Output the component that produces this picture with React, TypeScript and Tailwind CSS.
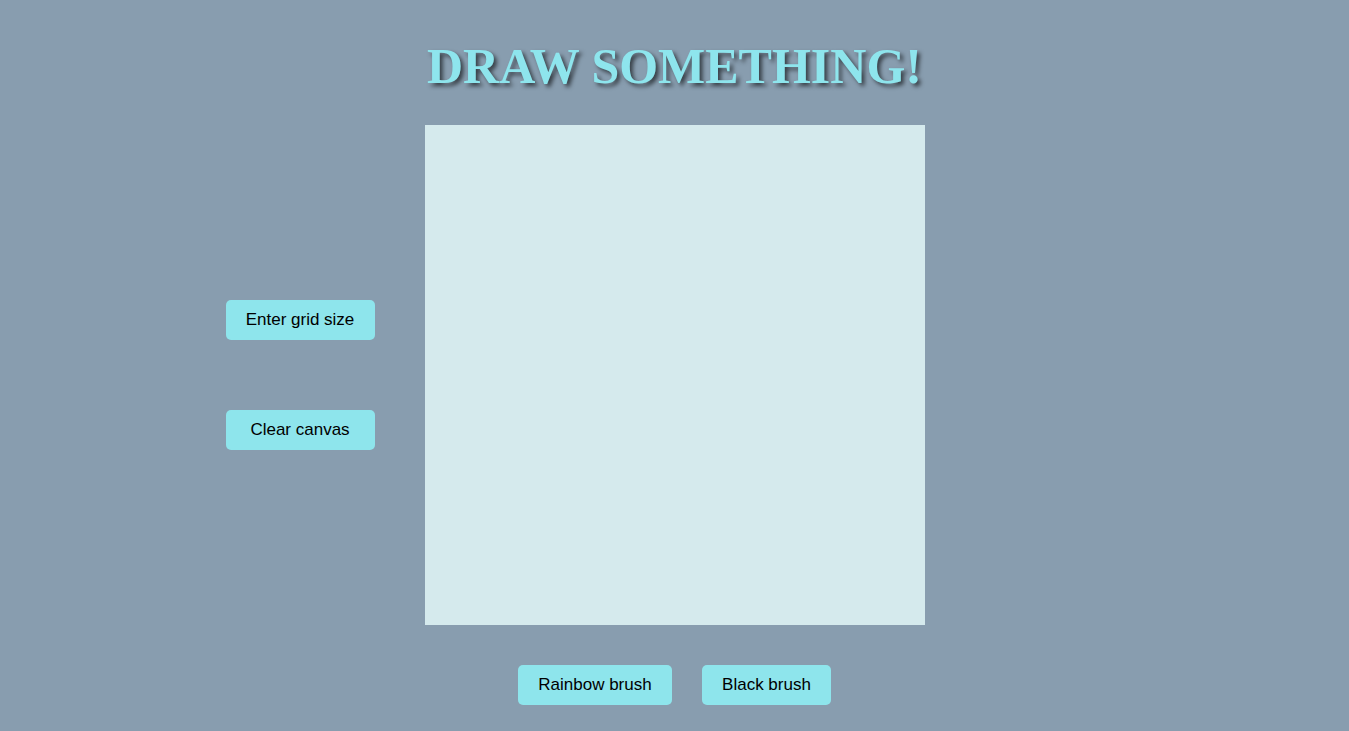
export default function App() {
  const btn =
    'h-10 rounded-[5px] bg-[#8ee5ec] px-5 text-[17px] text-black font-["Liberation_Sans",Arial,sans-serif]';

  return (
    <div className="min-h-[731px] w-full bg-[#889daf] pt-[36px]">
      <h1 className="text-center font-['Liberation_Serif','Times_New_Roman',serif] text-[50px] font-bold leading-[60px] text-[#8ee5ed] [text-shadow:3px_3px_4px_rgba(0,0,0,0.6)]">
        DRAW SOMETHING!
      </h1>

      <div className="mt-[29px] grid grid-cols-[1fr_500px_1fr]">
        {/* lado esquerdo: controles */}
        <div className="flex flex-col items-end justify-center gap-[70px] pr-[50px]">
          <button className={`${btn} w-[149px]`}>Enter grid size</button>
          <button className={`${btn} w-[149px]`}>Clear canvas</button>
        </div>

        <div className="h-[500px] w-[500px] bg-[#d5eaed]" />
        <div />
      </div>

      <div className="mt-10 flex justify-center gap-[30px]">
        <button className={`${btn} w-[154px]`}>Rainbow brush</button>
        <button className={`${btn} w-[129px]`}>Black brush</button>
      </div>
    </div>
  );
}
